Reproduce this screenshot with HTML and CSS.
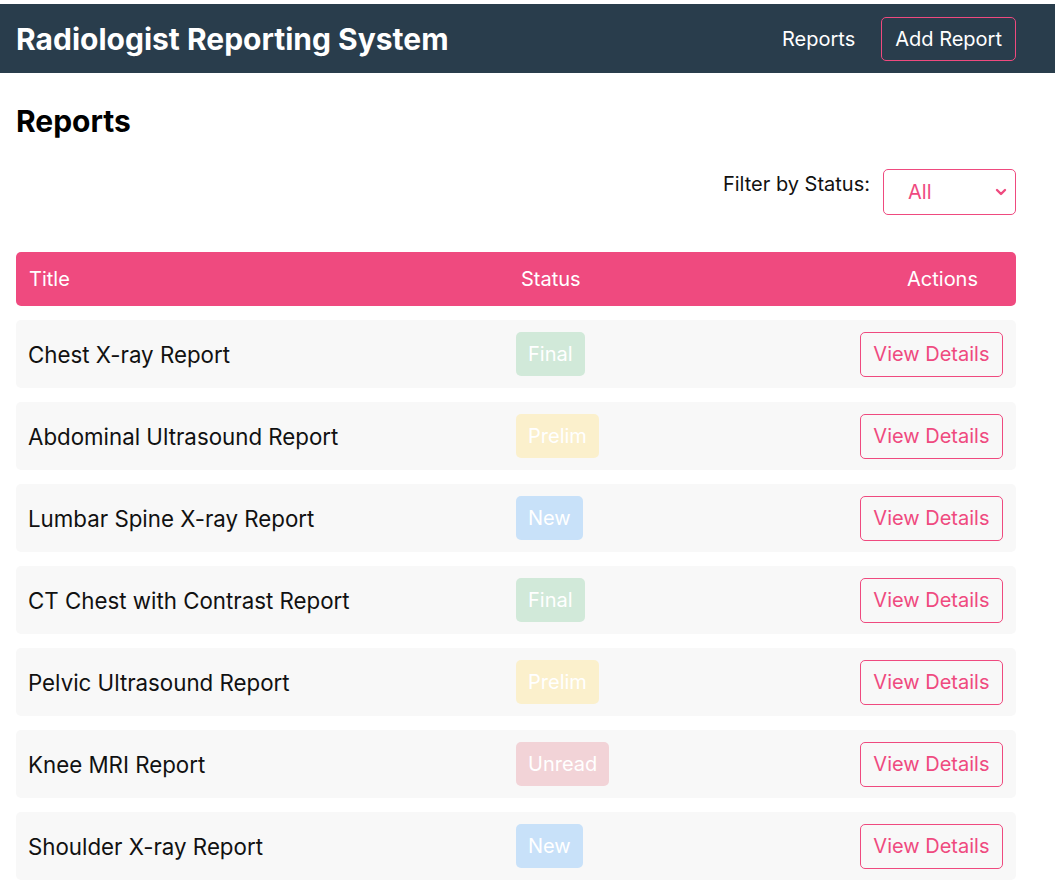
FILE: index.html
```html
<!DOCTYPE html>
<html lang="en">
<head>
<meta charset="utf-8">
<title>Radiologist Reporting System</title>
<link rel="stylesheet" href="styles.css">
</head>
<body>
<header class="topbar">
  <div class="topbar-inner">
    <h1 class="brand">Radiologist Reporting System</h1>
    <nav class="nav">
      <a class="nav-link" href="#">Reports</a>
      <a class="nav-btn" href="#">Add Report</a>
    </nav>
  </div>
</header>
<main class="content">
  <h2 class="page-title">Reports</h2>
  <div class="filter">
    <label class="filter-label" for="status">Filter by Status:</label>
    <div class="select">
      <span class="select-value">All</span>
      <svg class="chev" width="12" height="8" viewBox="0 0 12 8"><path d="M2 2 L6 6 L10 2" fill="none" stroke="#ef4a7f" stroke-width="2.4" stroke-linecap="round" stroke-linejoin="round"/></svg>
    </div>
  </div>
  <div class="table">
    <div class="thead">
      <span class="c-title">Title</span>
      <span class="c-status">Status</span>
      <span class="c-actions">Actions</span>
    </div>
    <div class="row"><span class="c-title">Chest X-ray Report</span><span class="c-status"><span class="badge final">Final</span></span><span class="c-actions"><a class="btn" href="#">View Details</a></span></div>
    <div class="row"><span class="c-title">Abdominal Ultrasound Report</span><span class="c-status"><span class="badge prelim">Prelim</span></span><span class="c-actions"><a class="btn" href="#">View Details</a></span></div>
    <div class="row"><span class="c-title">Lumbar Spine X-ray Report</span><span class="c-status"><span class="badge new">New</span></span><span class="c-actions"><a class="btn" href="#">View Details</a></span></div>
    <div class="row"><span class="c-title">CT Chest with Contrast Report</span><span class="c-status"><span class="badge final">Final</span></span><span class="c-actions"><a class="btn" href="#">View Details</a></span></div>
    <div class="row"><span class="c-title">Pelvic Ultrasound Report</span><span class="c-status"><span class="badge prelim">Prelim</span></span><span class="c-actions"><a class="btn" href="#">View Details</a></span></div>
    <div class="row"><span class="c-title">Knee MRI Report</span><span class="c-status"><span class="badge unread">Unread</span></span><span class="c-actions"><a class="btn" href="#">View Details</a></span></div>
    <div class="row"><span class="c-title">Shoulder X-ray Report</span><span class="c-status"><span class="badge new">New</span></span><span class="c-actions"><a class="btn" href="#">View Details</a></span></div>
  </div>
</main>
</body>
</html>
```
FILE: styles.css
```css
* { box-sizing: border-box; }
html, body { margin: 0; padding: 0; }
body {
  font-family: Inter, "Noto Sans", sans-serif;
  color: #111;
  background: #fff;
}
.topbar {
  margin-top: 4px;
  background: #293d4c;
  height: 69px;
}
.topbar-inner {
  width: 1000px;
  margin-left: 16px;
  height: 100%;
  display: flex;
  align-items: center;
  justify-content: space-between;
}
.brand {
  margin: 0;
  color: #fff;
  font-size: 30px;
  font-weight: 700;
}
.nav { display: flex; align-items: center; gap: 26px; }
.nav-link {
  color: #fff;
  text-decoration: none;
  font-size: 20px;
}
.nav-btn {
  color: #fff;
  text-decoration: none;
  font-size: 20px;
  border: 1px solid #ef4a7f;
  border-radius: 5px;
  height: 44px;
  padding: 0 13px;
  display: flex;
  align-items: center;
}
.content {
  width: 1000px;
  margin-left: 16px;
}
.page-title {
  margin: 0;
  padding-top: 30px;
  font-size: 30px;
  font-weight: 700;
  line-height: 36px;
  color: #000;
}
.filter {
  margin-top: 30px;
  display: flex;
  justify-content: flex-end;
  align-items: flex-start;
  gap: 13px;
}
.filter-label {
  font-size: 20px;
  padding-top: 3px;
  color: #111;
}
.select {
  width: 133px;
  height: 46px;
  border: 1px solid #ef4a7f;
  border-radius: 5px;
  display: flex;
  align-items: center;
  justify-content: space-between;
  padding: 0 8px 0 24px;
}
.select-value { color: #ef4a7f; font-size: 20px; }
.table {
  margin-top: 37px;
  display: flex;
  flex-direction: column;
  gap: 14px;
}
.thead, .row {
  display: grid;
  grid-template-columns: 487px 1fr 220px;
  align-items: center;
  border-radius: 5px;
}
.thead {
  background: #ef4a7f;
  color: #fff;
  height: 54px;
  font-size: 20px;
}
.thead .c-title { padding-left: 13px; }
.thead .c-status { padding-left: 18px; }
.thead .c-actions { text-align: right; padding-right: 38px; }
.row {
  background: #f8f8f8;
  height: 68px;
  font-size: 22.3px;
}
.row .c-title { padding-left: 12px; color: #111; }
.row .c-status { padding-left: 13px; }
.row .c-actions { display: flex; justify-content: flex-end; padding-right: 13px; }
.badge {
  display: inline-flex;
  align-items: center;
  height: 44px;
  padding: 0 12px;
  border-radius: 5px;
  color: #fff;
  font-size: 20px;
}
.final { background: #d1e9d9; }
.prelim { background: #fbf0cc; }
.new { background: #c8e1f9; }
.unread { background: #f2d3d7; }
.btn {
  display: inline-flex;
  align-items: center;
  height: 45px;
  padding: 0 12.5px;
  border: 1px solid #ef4a7f;
  border-radius: 5px;
  color: #ef4a7f;
  text-decoration: none;
  font-size: 20px;
  white-space: nowrap;
}
```
